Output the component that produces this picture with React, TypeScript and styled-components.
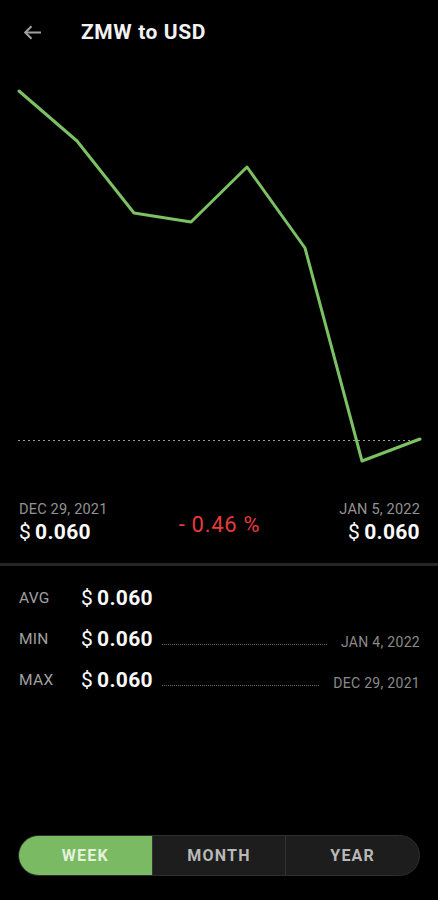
import React from "react";
import styled, { createGlobalStyle } from "styled-components";

const Global = createGlobalStyle`
  html, body { margin: 0; padding: 0; background: #000; }
  body { font-family: Roboto, "Noto Sans", Arial, sans-serif; color: #fff; }
  * { box-sizing: border-box; }
`;

const Page = styled.div`
  width: 438px;
  height: 900px;
  background: #000;
  display: flex;
  flex-direction: column;
`;

const Header = styled.div`
  height: 64px;
  display: flex;
  align-items: center;
  padding-left: 23px;
`;

const BackButton = styled.div`
  width: 18px;
  height: 20px;
  display: flex;
  align-items: center;
  justify-content: center;
  margin-right: 40px;
`;

const Title = styled.h1`
  margin: 0;
  font-size: 21px;
  font-weight: 700;
  color: #f2f2f2;
  letter-spacing: 0.6px;
`;

const Chart = styled.svg`
  display: block;
  width: 438px;
  height: 426px;
`;

const Summary = styled.div`
  display: flex;
  align-items: center;
  justify-content: space-between;
  padding: 2px 18px 0 19px;
  height: 62px;
`;

const SummaryCol = styled.div<{ $align: "left" | "right" }>`
  display: flex;
  flex-direction: column;
  align-items: ${(p) => (p.$align === "left" ? "flex-start" : "flex-end")};
  gap: 2px;
`;

const DateLabel = styled.span`
  font-size: 14.5px;
  color: #939393;
  letter-spacing: 0.2px;
`;

const Price = styled.span`
  font-size: 21px;
  font-weight: 700;
  color: #fafafa;
  white-space: nowrap;
  letter-spacing: 0.3px;
`;

const Dollar = styled.span`
  font-weight: 400;
  margin-right: 4px;
`;

const Change = styled.span`
  font-size: 22px;
  color: #e53b3b;
  margin-top: 4px;
  margin-right: 8px;
  letter-spacing: 0.7px;
  white-space: pre;
`;

const Divider = styled.div`
  height: 3px;
  background: #262626;
  margin-top: 11px;
`;

const Stats = styled.div`
  display: flex;
  flex-direction: column;
  padding: 20px 18px 0 19px;
  gap: 17px;
`;

const StatRow = styled.div`
  display: flex;
  align-items: center;
  height: 24px;
`;

const StatLabel = styled.span`
  width: 62px;
  font-size: 15.5px;
  color: #a0a0a0;
  letter-spacing: 0.3px;
`;

const Dots = styled.div`
  flex: 1;
  border-bottom: 1px dotted #6a6a6a;
  margin: 11px 14px 0 9px;
`;

const StatDate = styled.span`
  font-size: 14px;
  color: #8a8a8a;
  margin-top: 5px;
  letter-spacing: 0.3px;
`;

const Spacer = styled.div`
  flex: 1;
`;

const Segmented = styled.div`
  display: flex;
  margin: 0 18px 24px 18px;
  height: 41px;
  border-radius: 21px;
  overflow: hidden;
  background: #1d1d1d;
  border: 1px solid #2e2e2e;
`;

const Segment = styled.div<{ $active?: boolean }>`
  flex: 1;
  display: flex;
  align-items: center;
  justify-content: center;
  font-size: 16px;
  font-weight: 700;
  letter-spacing: 1.2px;
  color: ${(p) => (p.$active ? "#e4f1dc" : "#b8b8b8")};
  background: ${(p) => (p.$active ? "#7aba62" : "transparent")};
  & + & {
    border-left: 1px solid #333;
  }
`;

const points: [number, number][] = [
  [19, 91],
  [77, 141],
  [134, 213],
  [191, 222],
  [247, 167],
  [305, 248],
  [362, 461],
  [420, 439],
];

const Y0 = 64;

const StatLine = ({ label, date }: { label: string; date?: string }) => (
  <StatRow>
    <StatLabel>{label}</StatLabel>
    <Price>
      <Dollar>$</Dollar>0.060
    </Price>
    {date ? (
      <>
        <Dots />
        <StatDate>{date}</StatDate>
      </>
    ) : null}
  </StatRow>
);

export default function App() {
  const path = points.map(([x, y], i) => `${i ? "L" : "M"}${x} ${y - Y0}`).join(" ");
  return (
    <Page>
      <Global />
      <Header>
        <BackButton>
          <svg width="18" height="15" viewBox="0 0 18 15" fill="none" stroke="#a0a0a0" strokeWidth="2">
            <path d="M18 7.5H2.5" />
            <path d="M8.5 1.2L2.2 7.5l6.3 6.3" />
          </svg>
        </BackButton>
        <Title>ZMW to USD</Title>
      </Header>
      <Chart viewBox="0 0 438 426">
        <line x1="18" y1={440.5 - Y0} x2="420" y2={440.5 - Y0} stroke="#9a9a9a" strokeWidth="1" strokeDasharray="2 3" />
        <path d={path} fill="none" stroke="#7cc164" strokeWidth="3" strokeLinejoin="round" strokeLinecap="round" />
      </Chart>
      <Summary>
        <SummaryCol $align="left">
          <DateLabel>DEC 29, 2021</DateLabel>
          <Price>
            <Dollar>$</Dollar>0.060
          </Price>
        </SummaryCol>
        <Change>- 0.46 %</Change>
        <SummaryCol $align="right">
          <DateLabel>JAN 5, 2022</DateLabel>
          <Price>
            <Dollar>$</Dollar>0.060
          </Price>
        </SummaryCol>
      </Summary>
      <Divider />
      <Stats>
        <StatLine label="AVG" />
        <StatLine label="MIN" date="JAN 4, 2022" />
        <StatLine label="MAX" date="DEC 29, 2021" />
      </Stats>
      <Spacer />
      <Segmented>
        <Segment $active>WEEK</Segment>
        <Segment>MONTH</Segment>
        <Segment>YEAR</Segment>
      </Segmented>
    </Page>
  );
}
